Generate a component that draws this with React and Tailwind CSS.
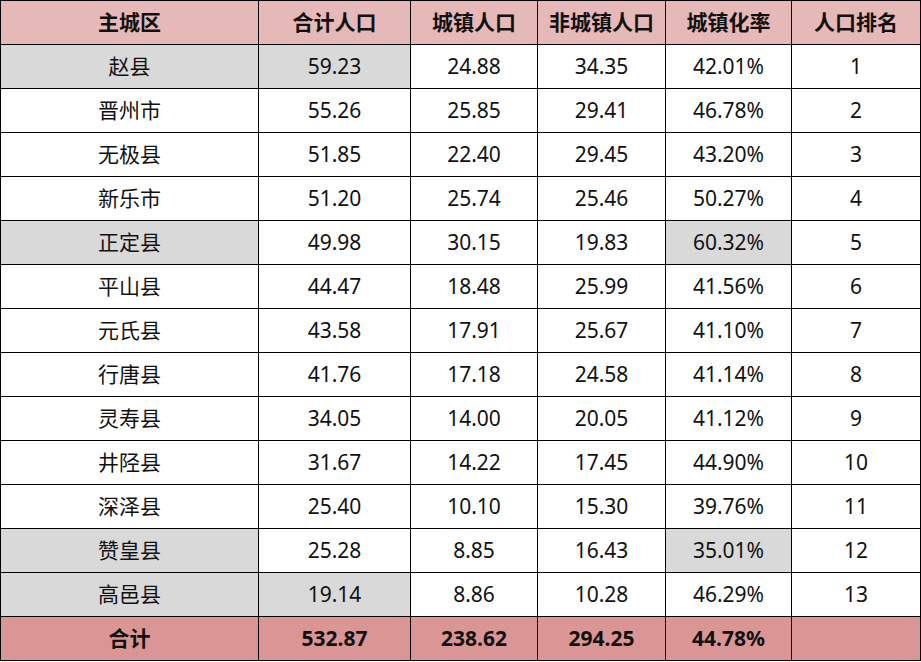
import React from "react";

const rows = [
  ["赵县", "59.23", "24.88", "34.35", "42.01%", "1", [0, 1]],
  ["晋州市", "55.26", "25.85", "29.41", "46.78%", "2", []],
  ["无极县", "51.85", "22.40", "29.45", "43.20%", "3", []],
  ["新乐市", "51.20", "25.74", "25.46", "50.27%", "4", []],
  ["正定县", "49.98", "30.15", "19.83", "60.32%", "5", [0, 4]],
  ["平山县", "44.47", "18.48", "25.99", "41.56%", "6", []],
  ["元氏县", "43.58", "17.91", "25.67", "41.10%", "7", []],
  ["行唐县", "41.76", "17.18", "24.58", "41.14%", "8", []],
  ["灵寿县", "34.05", "14.00", "20.05", "41.12%", "9", []],
  ["井陉县", "31.67", "14.22", "17.45", "44.90%", "10", []],
  ["深泽县", "25.40", "10.10", "15.30", "39.76%", "11", []],
  ["赞皇县", "25.28", "8.85", "16.43", "35.01%", "12", [0, 4]],
  ["高邑县", "19.14", "8.86", "10.28", "46.29%", "13", [0, 1]],
];

const headers = ["主城区", "合计人口", "城镇人口", "非城镇人口", "城镇化率", "人口排名"];
const total = ["合计", "532.87", "238.62", "294.25", "44.78%", ""];

const widths = ["w-[258px]", "w-[152px]", "w-[127px]", "w-[128px]", "w-[126px]", "w-[129px]"];

function Row({ cells, rowClass = "bg-white", shaded = [], bold = false }) {
  return (
    <div className={`flex h-[44px] border-b border-black ${rowClass}`}>
      {cells.map((c, i) => (
        <div
          key={i}
          className={`${widths[i]} shrink-0 flex items-center justify-center border-r border-black ${
            shaded.includes(i) ? "bg-[#d9d9d9]" : ""
          } ${bold ? "font-bold" : ""}`}
        >
          {c}
        </div>
      ))}
    </div>
  );
}

export default function App() {
  return (
    <div
      className="w-[921px] h-[662px] bg-white text-[21px] text-[#111] leading-none"
      style={{ fontFamily: '"Noto Sans", "Noto Sans CJK SC", sans-serif' }}
    >
      <div className="w-[921px] border-l border-t border-black">
        <Row cells={headers} rowClass="bg-[#e6b8b7] h-[43px]" bold />
        {rows.map((r) => (
          <Row key={r[0]} cells={r.slice(0, 6)} shaded={r[6]} />
        ))}
        <Row cells={total} rowClass="bg-[#da9694]" bold />
      </div>
    </div>
  );
}
